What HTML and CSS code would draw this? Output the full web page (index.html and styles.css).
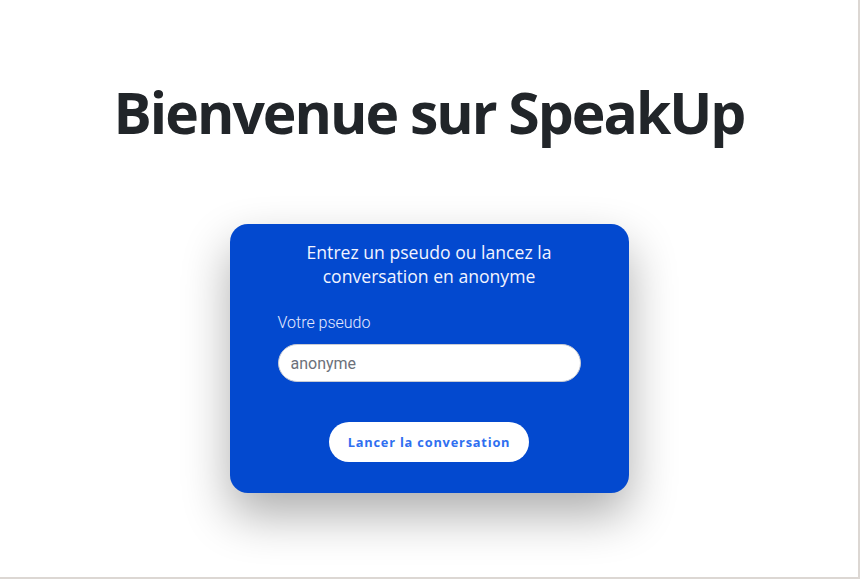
FILE: index.html
```html
<!DOCTYPE html>
<html lang="fr">
<head>
<meta charset="utf-8">
<title>SpeakUp</title>
<link rel="stylesheet" href="styles.css">
</head>
<body>
<main class="page">
  <h1 class="title">Bienvenue sur SpeakUp</h1>
  <form class="card">
    <p class="card-intro">Entrez un pseudo ou lancez la<br>conversation en anonyme</p>
    <label class="field-label" for="pseudo">Votre pseudo</label>
    <input class="field-input" id="pseudo" type="text" placeholder="anonyme">
    <button class="start-btn" type="button">Lancer la conversation</button>
  </form>
</main>
</body>
</html>
```
FILE: styles.css
```css
html {
  background: #dcd7d3;
}
body {
  margin: 0;
}
.page {
  box-sizing: border-box;
  width: 858px;
  height: 577px;
  background: #ffffff;
  display: flex;
  flex-direction: column;
  align-items: center;
  overflow: hidden;
}
.title {
  margin: 72px 0 0;
  font-family: "Open Sans", sans-serif;
  font-weight: 700;
  font-size: 57px;
  line-height: 80px;
  letter-spacing: -2px;
  color: #212529;
}
.card {
  box-sizing: border-box;
  margin-top: 72px;
  width: 399px;
  height: 269px;
  padding: 16px 48px 0;
  background: #0349cf;
  border-radius: 18px;
  box-shadow: 0 22px 48px rgba(0, 0, 0, 0.32);
  display: flex;
  flex-direction: column;
}
.card-intro {
  margin: 0;
  text-align: center;
  font-family: "Open Sans", sans-serif;
  font-size: 17.6px;
  line-height: 24px;
  color: #f2f4ff;
}
.field-label {
  margin-top: 25px;
  font-family: Roboto, sans-serif;
  font-weight: 300;
  font-size: 16px;
  line-height: 20px;
  color: #e6eaff;
}
.field-input {
  box-sizing: border-box;
  margin-top: 11px;
  width: 303px;
  height: 38px;
  padding: 0 12px;
  border: 1px solid #c8cbd4;
  border-radius: 19px;
  background: #ffffff;
  font-family: Roboto, sans-serif;
  font-size: 16px;
  color: #333;
  outline: none;
}
.field-input::placeholder {
  color: #6c717a;
}
.start-btn {
  align-self: center;
  margin-top: 40px;
  width: 200px;
  height: 40px;
  border: none;
  border-radius: 20px;
  background: #ffffff;
  font-family: "Open Sans", sans-serif;
  font-weight: 700;
  font-size: 12.8px;
  letter-spacing: 0.8px;
  color: #2f6ff0;
  cursor: pointer;
}
```
